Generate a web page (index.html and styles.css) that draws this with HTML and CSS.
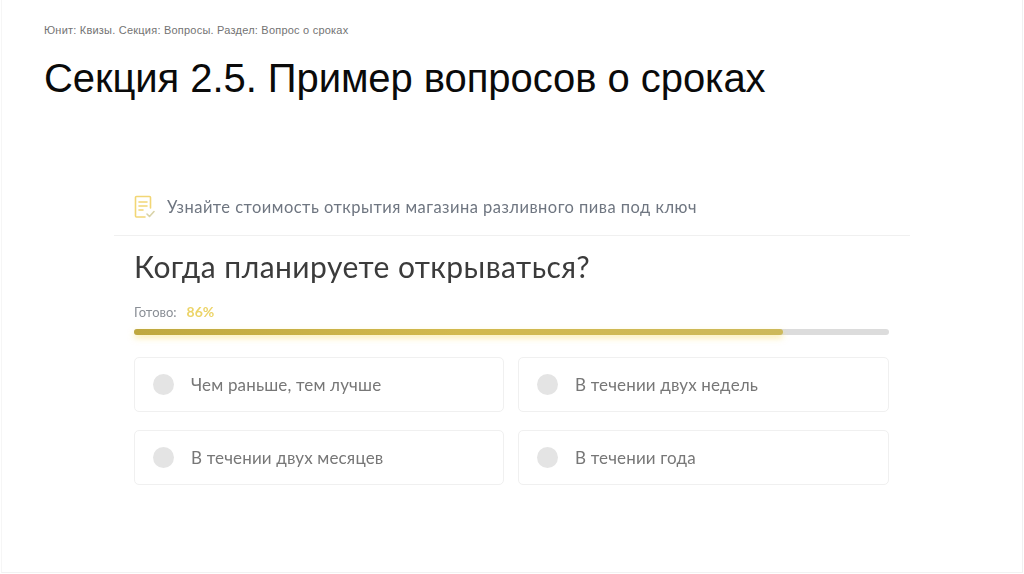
FILE: index.html
```html
<!DOCTYPE html>
<html lang="ru">
<head>
<meta charset="utf-8">
<title>Секция 2.5</title>
<link rel="stylesheet" href="styles.css">
</head>
<body>
<main class="slide">
  <p class="crumbs">Юнит: Квизы. Секция: Вопросы. Раздел: Вопрос о сроках</p>
  <h1 class="title">Секция 2.5. Пример вопросов о сроках</h1>
  <section class="quiz">
    <div class="quiz-head">
      <svg class="quiz-icon" width="22" height="24" viewBox="0 0 22 24" fill="none" stroke="#f2d675" stroke-width="1.6" stroke-linecap="round" stroke-linejoin="round">
        <path d="M11 22H2.5a1 1 0 0 1-1-1V2.5a1 1 0 0 1 1-1h13a1 1 0 0 1 1 1V13"/>
        <path d="M5 7h8M5 11h8M5 15h4"/>
        <path d="M13 19l2.5 2.5L20 16.5" stroke="#d9d3a8"/>
      </svg>
      <span class="quiz-caption">Узнайте стоимость открытия магазина разливного пива под ключ</span>
    </div>
    <div class="quiz-body">
      <h2 class="question">Когда планируете открываться?</h2>
      <div class="progress-label"><span class="ready">Готово:</span><span class="percent">86%</span></div>
      <div class="track"><div class="fill"></div></div>
      <div class="options">
        <div class="option"><span class="radio"></span><span class="option-text">Чем раньше, тем лучше</span></div>
        <div class="option"><span class="radio"></span><span class="option-text">В течении двух недель</span></div>
        <div class="option"><span class="radio"></span><span class="option-text">В течении двух месяцев</span></div>
        <div class="option"><span class="radio"></span><span class="option-text">В течении года</span></div>
      </div>
    </div>
  </section>
</main>
</body>
</html>
```
FILE: styles.css
```css
* { box-sizing: border-box; }
html, body { margin: 0; height: 100%; background: #fff; }
body { padding: 0 1px 1px 1px; overflow: hidden; }
.slide {
  height: 573px;
  background: #fff;
  border-left: 1px solid #f6f6f6;
  border-right: 1px solid #f0f0f0;
  border-bottom: 1px solid #f2f2f2;
  padding: 24px 0 0 42px;
  display: flex;
  flex-direction: column;
  align-items: flex-start;
}
.crumbs {
  margin: 0;
  font: 11px/13px "Liberation Sans", Arial, sans-serif;
  letter-spacing: 0.02em;
  color: #737373;
}
.title {
  margin: 18px 0 0;
  font: 400 40px/46px "Liberation Sans", Arial, sans-serif;
  letter-spacing: -0.06px;
  color: #0a0a0a;
}
.quiz {
  width: 796px;
  margin: 90px 0 0 70px;
}
.quiz-head {
  height: 45px;
  display: flex;
  align-items: center;
  gap: 11px;
  padding: 0 0 12px 20px;
  border-bottom: 1px solid #f0f0f0;
}
.quiz-icon { flex: none; filter: blur(0.4px); }
.quiz-caption {
  font: 400 16.5px/20px Lato, "Noto Sans", sans-serif;
  letter-spacing: 0.47px;
  color: #6f7681;
  filter: blur(0.4px);
}
.quiz-body { padding: 0 21px 0 20px; }
.question {
  margin: 12px 0 0;
  font: 400 30px/36px Lato, "Noto Sans", sans-serif;
  letter-spacing: 0.45px;
  color: #3b3b3b;
  filter: blur(0.4px);
}
.progress-label {
  margin-top: 20px;
  display: flex;
  align-items: center;
  gap: 10px;
  height: 16px;
  filter: blur(0.4px);
}
.ready { font: 13px/16px Lato, "Noto Sans", sans-serif; color: #8a8f96; }
.percent { font: 700 14px/16px Lato, "Noto Sans", sans-serif; color: #ecd468; }
.track {
  margin-top: 9px;
  height: 6px;
  border-radius: 3px;
  background: #dcdcdc;
}
.fill {
  width: 86%;
  height: 6px;
  border-radius: 3px;
  background: linear-gradient(90deg, #bfa83f, #d2b94e 50%, #cdb95b);
  box-shadow: 0 3px 6px rgba(250, 222, 110, 0.55);
}
.options {
  margin-top: 22px;
  display: grid;
  grid-template-columns: 370px 371px;
  column-gap: 14px;
  row-gap: 18px;
}
.option {
  height: 55px;
  display: flex;
  align-items: center;
  gap: 17px;
  padding-left: 18px;
  border: 1px solid #f0f0f0;
  border-radius: 5px;
}
.option-text {
  font: 400 17px/20px Lato, "Noto Sans", sans-serif;
  letter-spacing: 0.15px;
  color: #777;
  filter: blur(0.4px);
}
.radio {
  width: 21px;
  height: 21px;
  border-radius: 50%;
  background: #e4e4e4;
  flex: none;
}
```
